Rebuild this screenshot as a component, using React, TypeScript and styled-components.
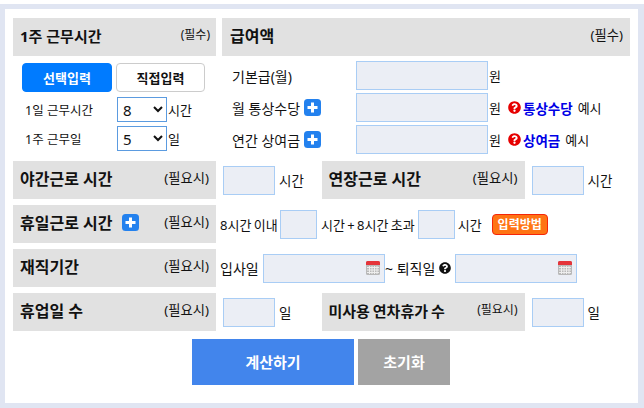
import React from "react";
import styled, { createGlobalStyle } from "styled-components";
import { FaQuestionCircle } from "react-icons/fa";

const Global = createGlobalStyle`
  html, body { margin: 0; padding: 0; background: #fff; }
  body { font-family: "Noto Sans", "Noto Sans CJK KR", sans-serif; color: #111; }
  * { box-sizing: border-box; }
`;

const Frame = styled.div`
  margin-top: 4px;
  width: 644px;
  height: 404px;
  border: solid #e0e5f2;
  border-width: 5px 6px 5px 5px;
  background: #fff;
  padding: 9px 8px 0 8px;
  display: flex;
  flex-direction: column;
`;

const Top = styled.div`
  display: flex;
  gap: 6px;
  height: 143px;
`;

const LeftCol = styled.div`
  width: 203px;
  display: flex;
  flex-direction: column;
`;

const RightCol = styled.div`
  width: 408px;
  display: flex;
  flex-direction: column;
`;

const Head = styled.div<{ $w?: number; $pl?: number; $pr?: number }>`
  width: ${(p) => (p.$w ? `${p.$w}px` : "100%")};
  height: 38px;
  flex: none;
  background: #e1e1e1;
  display: flex;
  align-items: center;
  justify-content: space-between;
  padding: 0 ${(p) => p.$pr ?? 7}px 4px ${(p) => p.$pl ?? 7}px;
`;

const Title = styled.span<{ $size?: number; $tight?: boolean }>`
  font-size: ${(p) => p.$size ?? 16}px;
  font-weight: 700;
  color: #111;
  display: flex;
  align-items: center;
  gap: 10px;
  white-space: nowrap;
  word-spacing: ${(p) => (p.$tight ? "-1px" : "0")};
`;

const Note = styled.span<{ $size?: number }>`
  font-size: ${(p) => p.$size ?? 13.3}px;
  margin-top: -2px;
  white-space: nowrap;
`;

const Tabs = styled.div`
  display: flex;
  gap: 4px;
  margin: 7px 0 5px 9px;
`;

const Tab = styled.div<{ $on?: boolean }>`
  height: 29px;
  width: ${(p) => (p.$on ? 90 : 89)}px;
  border-radius: 4px;
  display: flex;
  align-items: center;
  justify-content: center;
  padding-bottom: 1px;
  font-size: 13px;
  font-weight: 700;
  background: ${(p) => (p.$on ? "#007bff" : "#fff")};
  color: ${(p) => (p.$on ? "#fff" : "#111")};
  border: 1px solid ${(p) => (p.$on ? "#007bff" : "#ccc")};
`;

const SelectRow = styled.div`
  display: flex;
  align-items: center;
  height: 25px;
  margin-bottom: 4px;
  padding-left: 12px;
  font-size: 13px;
`;

const SelectLabel = styled.span`
  width: 92px;
  white-space: nowrap;
  font-size: 12.5px;
`;

const Sel = styled.select`
  width: 50px;
  height: 100%;
  border: 1px solid #5b9be0;
  background: #fff;
  font: 15px "Noto Sans", sans-serif;
  color: #111;
  padding: 0 0 0 1px;
  margin-right: 1px;
`;

const AmountRow = styled.div<{ $first?: boolean }>`
  display: flex;
  align-items: center;
  height: 29px;
  margin: ${(p) => (p.$first ? 5 : 0)}px 0 3px;
  font-size: 13px;
`;

const AmountLabel = styled.span`
  width: 134px;
  padding-left: 10px;
  display: flex;
  align-items: center;
  gap: 4px;
  font-size: 14px;
  white-space: nowrap;
`;

const Field = styled.div<{ $w: number; $ml?: number }>`
  width: ${(p) => p.$w}px;
  height: 29px;
  flex: none;
  margin-left: ${(p) => p.$ml ?? 0}px;
  background: #ebeef5;
  border: 1px solid #a9cdf5;
  display: flex;
  align-items: center;
  justify-content: flex-end;
  padding-right: 4px;
`;

const Unit = styled.span<{ $ml?: number; $tight?: boolean }>`
  margin-left: ${(p) => p.$ml ?? 1}px;
  white-space: nowrap;
  word-spacing: ${(p) => (p.$tight ? "-1px" : "0")};
`;

const CellUnit = styled(Unit)`
  font-size: 13.5px;
`;

const Hint = styled.span`
  display: flex;
  align-items: center;
  margin-left: 7px;
  font-size: 13px;
  white-space: nowrap;
  svg { color: #e60000; width: 13px; height: 13px; margin-right: 2px; }
  b { color: #0000e6; font-size: 13.5px; margin-right: 5px; }
`;

const Row = styled.div<{ $last?: boolean }>`
  display: flex;
  height: 38px;
  margin-bottom: ${(p) => (p.$last ? 0 : 6)}px;
  align-items: center;
`;

const Cell = styled.div`
  width: 106px;
  display: flex;
  align-items: center;
  padding-left: 7px;
`;

const Inline = styled.div`
  display: flex;
  align-items: center;
  padding-left: 4px;
  white-space: nowrap;
  font-size: 13px;
`;

const PeriodLabel = styled.span<{ $w: number; $ml?: number }>`
  width: ${(p) => p.$w}px;
  margin-left: ${(p) => p.$ml ?? 0}px;
  font-size: 14px;
`;

const Within = styled.span`
  width: 58px;
  word-spacing: -1px;
`;

const Badge = styled.span`
  margin-left: 10px;
  background: #ff7414;
  color: #fff;
  border: 1px solid #f5260a;
  border-radius: 4px;
  font-size: 12px;
  font-weight: 700;
  width: 56px;
  height: 21px;
  display: flex;
  align-items: center;
  justify-content: center;
`;

const Actions = styled.div`
  display: flex;
  gap: 4px;
  margin: 8px 0 0 179px;
`;

const Action = styled.div<{ $bg: string; $w: number }>`
  width: ${(p) => p.$w}px;
  height: 46px;
  background: ${(p) => p.$bg};
  color: #fff;
  font-size: 15px;
  font-weight: 700;
  display: flex;
  align-items: center;
  justify-content: center;
  padding-bottom: 2px;
`;

const PlusBox = styled.svg`
  flex: none;
  display: block;
`;

const Plus = () => (
  <PlusBox width="17" height="17" viewBox="0 0 17 17">
    <rect x="0" y="0" width="17" height="17" rx="3.5" fill="#2381ee" />
    <path d="M8.5 3.5v10M3.5 8.5h10" stroke="#fff" strokeWidth="3" />
  </PlusBox>
);

const Calendar = () => (
  <svg width="14" height="14" viewBox="0 0 14 14">
    <rect x="0" y="0" width="14" height="14" rx="1.5" fill="#b9b9b9" />
    <path d="M0 4V1.5A1.5 1.5 0 0 1 1.5 0h11A1.5 1.5 0 0 1 14 1.5V4z" fill="#e5343a" />
    <path d="M1 6.5h12M1 9h12M1 11.5h12M3.5 5v8M6 5v8M8.5 5v8M11 5v8" stroke="#eee" strokeWidth="1" />
  </svg>
);

const Black = styled(FaQuestionCircle)`
  color: #111;
  width: 12px;
  height: 12px;
  flex: none;
  margin: 0 4px 0 4px;
`;

export default function App() {
  return (
    <>
      <Global />
      <Frame>
        <Top>
          <LeftCol>
            <Head $pr={6}>
              <Title $size={15}>1주 근무시간</Title>
              <Note $size={12}>(필수)</Note>
            </Head>
            <Tabs>
              <Tab $on>선택입력</Tab>
              <Tab>직접입력</Tab>
            </Tabs>
            <SelectRow>
              <SelectLabel>1일 근무시간</SelectLabel>
              <Sel defaultValue="8"><option>8</option></Sel>
              <span>시간</span>
            </SelectRow>
            <SelectRow>
              <SelectLabel>1주 근무일</SelectLabel>
              <Sel defaultValue="5"><option>5</option></Sel>
              <span>일</span>
            </SelectRow>
          </LeftCol>
          <RightCol>
            <Head $pl={8}>
              <Title>급여액</Title>
              <Note>(필수)</Note>
            </Head>
            <AmountRow $first>
              <AmountLabel>기본급(월)</AmountLabel>
              <Field $w={132} />
              <Unit>원</Unit>
            </AmountRow>
            <AmountRow>
              <AmountLabel>월 통상수당 <Plus /></AmountLabel>
              <Field $w={132} />
              <Unit>원</Unit>
              <Hint><FaQuestionCircle /><b>통상수당</b>예시</Hint>
            </AmountRow>
            <AmountRow>
              <AmountLabel>연간 상여금 <Plus /></AmountLabel>
              <Field $w={132} />
              <Unit>원</Unit>
              <Hint><FaQuestionCircle /><b>상여금</b>예시</Hint>
            </AmountRow>
          </RightCol>
        </Top>
        <Row>
          <Head $w={203}>
            <Title>야간근로 시간</Title>
            <Note>(필요시)</Note>
          </Head>
          <Cell>
            <Field $w={52} />
            <CellUnit $ml={4}>시간</CellUnit>
          </Cell>
          <Head $w={203}>
            <Title>연장근로 시간</Title>
            <Note>(필요시)</Note>
          </Head>
          <Cell>
            <Field $w={52} />
            <CellUnit $ml={4}>시간</CellUnit>
          </Cell>
        </Row>
        <Row>
          <Head $w={203}>
            <Title>휴일근로 시간 <Plus /></Title>
            <Note>(필요시)</Note>
          </Head>
          <Inline>
            <Within>8시간 이내</Within>
            <Field $w={37} $ml={2} />
            <Unit $ml={4} $tight>시간 + 8시간 초과</Unit>
            <Field $w={37} $ml={3} />
            <Unit $ml={3}>시간</Unit>
            <Badge>입력방법</Badge>
          </Inline>
        </Row>
        <Row>
          <Head $w={203}>
            <Title>재직기간</Title>
            <Note>(필요시)</Note>
          </Head>
          <Inline>
            <PeriodLabel $w={39}>입사일</PeriodLabel>
            <Field $w={122} $ml={4}><Calendar /></Field>
            <PeriodLabel $w={50}>~ 퇴직일</PeriodLabel>
            <Black />
            <Field $w={122}><Calendar /></Field>
          </Inline>
        </Row>
        <Row $last>
          <Head $w={203}>
            <Title>휴업일 수</Title>
            <Note>(필요시)</Note>
          </Head>
          <Cell>
            <Field $w={52} />
            <CellUnit $ml={4}>일</CellUnit>
          </Cell>
          <Head $w={203}>
            <Title $size={15} $tight>미사용 연차휴가 수</Title>
            <Note $size={12}>(필요시)</Note>
          </Head>
          <Cell>
            <Field $w={52} />
            <CellUnit $ml={4}>일</CellUnit>
          </Cell>
        </Row>
        <Actions>
          <Action $bg="#4285ec" $w={162}>계산하기</Action>
          <Action $bg="#a3a3a3" $w={92}>초기화</Action>
        </Actions>
      </Frame>
    </>
  );
}
